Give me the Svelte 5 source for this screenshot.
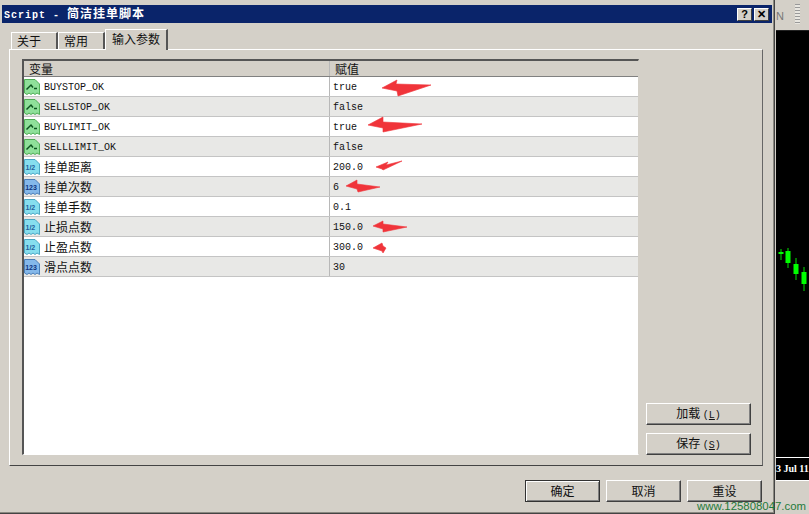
<script>
	// Input parameters shown in the table
	const rows = [
		{ name: "BUYSTOP_OK", type: "bool", value: "true" },
		{ name: "SELLSTOP_OK", type: "bool", value: "false" },
		{ name: "BUYLIMIT_OK", type: "bool", value: "true" },
		{ name: "SELLLIMIT_OK", type: "bool", value: "false" },
		{ name: "挂单距离", type: "double", value: "200.0" },
		{ name: "挂单次数", type: "int", value: "6" },
		{ name: "挂单手数", type: "double", value: "0.1" },
		{ name: "止损点数", type: "double", value: "150.0" },
		{ name: "止盈点数", type: "double", value: "300.0" },
		{ name: "滑点点数", type: "int", value: "30" }
	];

	// Hand drawn red arrows, in page coordinates
	const arrows = [
		"382,88 397,80 396,84 431,85 398,96 397,91",
		"368,125 383,117 383,122 422,124 383,132 383,128",
		"376,167 388,162 386,165 402,161 383,170 382,169",
		"346,186 357,180 357,184 380,187 358,192 357,189",
		"373,226 383,221 383,224 407,227 383,232 383,229",
		"373,248 382,243 383,246 386,248 383,253 382,251"
	];

	const candles = [
		{ x: 781, top: 249, bottom: 260, bodyTop: 252, bodyBottom: 254 },
		{ x: 788, top: 248, bottom: 268, bodyTop: 251, bodyBottom: 263 },
		{ x: 796, top: 258, bottom: 280, bodyTop: 264, bodyBottom: 274 },
		{ x: 804, top: 267, bottom: 291, bodyTop: 272, bodyBottom: 284 }
	];
</script>

<main>
	<section class="dialog">
		<header class="title">
			<span class="heading"><span class="latin">Script&nbsp;-&nbsp;</span>简洁挂单脚本</span>
			<div class="caption-btn">?</div>
			<div class="caption-btn close">✕</div>
		</header>

		<nav class="tabs">
			<div class="tab">关于</div>
			<div class="tab">常用</div>
			<div class="tab active">输入参数</div>
		</nav>

		<div class="panel">
			<div class="list">
				<div class="row head">
					<div class="name">变量</div>
					<div class="value">赋值</div>
				</div>
				{#each rows as row, i}
					<div class="row" class:alt={i % 2 === 1}>
						<div class="name">
							<svg class="icon" width="16" height="16" viewBox="0 0 16 16">
								{#if row.type === "bool"}
									<path d="M.5 .5H11L15.500 5V15.500L13 14 11 15.500 9 14 7 15.500 5 14 3 15.500 .5 14Z" fill="#8fe09a" stroke="#4fae56" />
									<path d="M2.500 10.500L7 6 9 8.500M10 9.500H13" fill="none" stroke="#0c5420" stroke-width="1.500" />
								{:else if row.type === "double"}
									<path d="M.5 .5H11L15.500 5V15.500L13 14 11 15.500 9 14 7 15.500 5 14 3 15.500 .5 14Z" fill="#86deee" stroke="#4aa7c4" />
									<text x="1.500" y="10.500" class="icon-text" fill="#1f5f9c">1/2</text>
								{:else}
									<path d="M.5 .5H11L15.500 5V15.500L13 14 11 15.500 9 14 7 15.500 5 14 3 15.500 .5 14Z" fill="#84b8ea" stroke="#4a7fb8" />
									<text x="1.200" y="11" class="icon-text" fill="#0e3480">123</text>
								{/if}
							</svg>
							<span class:latin={/^[A-Z_]+$/.test(row.name)}>{row.name}</span>
						</div>
						<div class="value"><span class="latin">{row.value}</span></div>
					</div>
				{/each}

				<svg class="arrows" viewBox="24 61 614 393" width="614" height="393">
					{#each arrows as points}
						<polygon {points} fill="#f0343a" stroke="#f0343a" stroke-width="0.6" />
					{/each}
				</svg>
			</div>

			<aside class="side">
				<button>加载 <span class="latin">(<u>L</u>)</span></button>
				<button>保存 <span class="latin">(<u>S</u>)</span></button>
			</aside>
		</div>

		<footer class="actions">
			<button class="default">确定</button>
			<button>取消</button>
			<button>重设</button>
		</footer>
	</section>

	<section class="chart">
		<div class="toolbar">
			<span>N</span>
			<i class="grip"></i>
		</div>
		<div class="plot">
			<svg class="candles" viewBox="776 31 33 427" width="33" height="427">
				{#each candles as c}
					<line x1={c.x} x2={c.x} y1={c.top} y2={c.bottom} stroke="#00e000" stroke-width="1" />
					<rect x={c.x - 2.5} y={c.bodyTop} width="5" height={c.bodyBottom - c.bodyTop} fill="#00ff00" />
				{/each}
			</svg>
		</div>
		<div class="dates">3 Jul 11</div>
		<div class="status"></div>
	</section>

	<div class="watermark">www.125808047.com</div>
</main>

<style>
	:global(body) {
		margin: 0;
		background: #d4d0c8;
	}

	* {
		box-sizing: border-box;
	}

	main {
		position: relative;
		display: flex;
		width: 809px;
		height: 514px;
		overflow: hidden;
		font-family: "Noto Sans CJK SC", sans-serif;
		font-size: 12px;
		line-height: 14px;
		color: #111;
	}

	.latin {
		font-family: "Liberation Mono", monospace;
		font-size: 10px;
	}

	.dialog {
		display: flex;
		flex-direction: column;
		width: 775px;
		height: 514px;
		padding: 5px 2px 0 2px;
		background: #d4d0c8;
		border-right: 1px solid #444;
		border-bottom: 1px solid #444;
		box-shadow: inset -1px -1px 0 #8a8880;
	}

	.title {
		display: flex;
		align-items: center;
		gap: 2px;
		height: 18px;
		padding: 0 3px 0 2px;
		background: #0a246a;
		color: #fff;
	}

	.heading {
		flex: 1;
		font-weight: bold;
		letter-spacing: 1px;
	}

	.heading .latin {
		font-weight: bold;
	}

	.caption-btn {
		width: 15px;
		height: 13px;
		background: #d4d0c8;
		border: 1px solid;
		border-color: #fff #404040 #404040 #fff;
		color: #000;
		font: bold 11px/11px "Liberation Sans", sans-serif;
		text-align: center;
	}

	.tabs {
		display: flex;
		align-items: flex-end;
		height: 26px;
		margin: 0 0 0 9px;
		padding-top: 6px;
	}

	.tab {
		width: 47px;
		height: 17px;
		padding: 1px 0 0 5px;
		border-left: 1px solid #fff;
		border-top: 1px solid #fff;
		border-right: 2px solid #555;
		line-height: 13px;
	}

	.tab.active {
		position: relative;
		top: 1px;
		width: 63px;
		height: 21px;
		padding: 2px 0 0 6px;
		background: #d4d0c8;
	}

	.panel {
		display: flex;
		gap: 7px;
		width: 754px;
		height: 417px;
		margin-left: 7px;
		padding: 9px 10px 10px 12px;
		border: 1px solid;
		border-color: #fff #666 #444 #fff;
	}

	.list {
		position: relative;
		flex: none;
		width: 617px;
		height: 396px;
		background: #fff;
		border: 1px solid;
		border-color: #555 #d4d0c8 #fff #555;
		border-top-width: 2px;
		border-left-width: 2px;
		overflow: hidden;
	}

	.row {
		display: grid;
		grid-template-columns: 306px 1fr;
		height: 20px;
		border-bottom: 1px solid #c4c4c4;
		background: #fff;
	}

	.row.alt {
		background: #e8e8e6;
	}

	.row.head {
		height: 16px;
		background: #d4d0c8;
		border-bottom: 1px solid #808080;
	}

	.row.head .name {
		padding-left: 5px;
	}

	.row.head .value {
		padding-left: 5px;
	}

	.name {
		display: flex;
		align-items: center;
		gap: 4px;
		border-right: 1px solid #b8b8b8;
	}

	.value {
		display: flex;
		align-items: center;
		padding-left: 3px;
	}

	.name .latin,
	.value .latin {
		margin-top: 2px;
	}

	.icon {
		flex: none;
	}

	.icon-text {
		font: bold 7px "Liberation Sans", sans-serif;
	}

	.arrows {
		position: absolute;
		left: 0;
		top: 0;
	}

	.side {
		display: flex;
		flex-direction: column;
		justify-content: flex-end;
		gap: 8px;
	}

	button {
		padding: 0;
		background: #d4d0c8;
		border: 1px solid;
		border-color: #fff #404040 #404040 #fff;
		box-shadow: inset -1px -1px 0 #808080;
		font: inherit;
		color: #111;
	}

	button.default {
		border-color: #333;
		box-shadow: inset 1px 1px 0 #fff, inset -1px -1px 0 #808080;
	}

	.side button {
		width: 105px;
		height: 22px;
	}

	.actions {
		display: flex;
		justify-content: flex-end;
		gap: 6px;
		padding: 14px 10px 0 0;
	}

	.actions button {
		width: 75px;
		height: 22px;
	}

	.chart {
		display: flex;
		flex-direction: column;
		flex: 1;
		margin-left: 1px;
	}

	.toolbar {
		display: flex;
		gap: 11px;
		height: 31px;
		padding: 9px 0 0 0;
		color: #777;
		font: 11px/14px "Liberation Sans", sans-serif;
		border-bottom: 1px solid #222;
	}

	.grip {
		width: 5px;
		height: 20px;
		margin-top: -5px;
		background: repeating-linear-gradient(#999 0 1px, #e8e6e0 1px 3px);
	}

	.plot {
		height: 427px;
		background: #000;
		border-bottom: 1px solid #fff;
	}

	.candles {
		display: block;
	}

	.dates {
		height: 22px;
		padding-top: 3px;
		background: #000;
		color: #fff;
		font: bold 10px/16px "Liberation Serif", serif;
	}

	.status {
		flex: 1;
		background: #d4d0c8;
		border-top: 1px solid #fff;
	}

	.watermark {
		position: absolute;
		right: 3px;
		bottom: 1px;
		color: #1f7a3a;
		font: 11.4px/14px "Liberation Sans", sans-serif;
	}
</style>
